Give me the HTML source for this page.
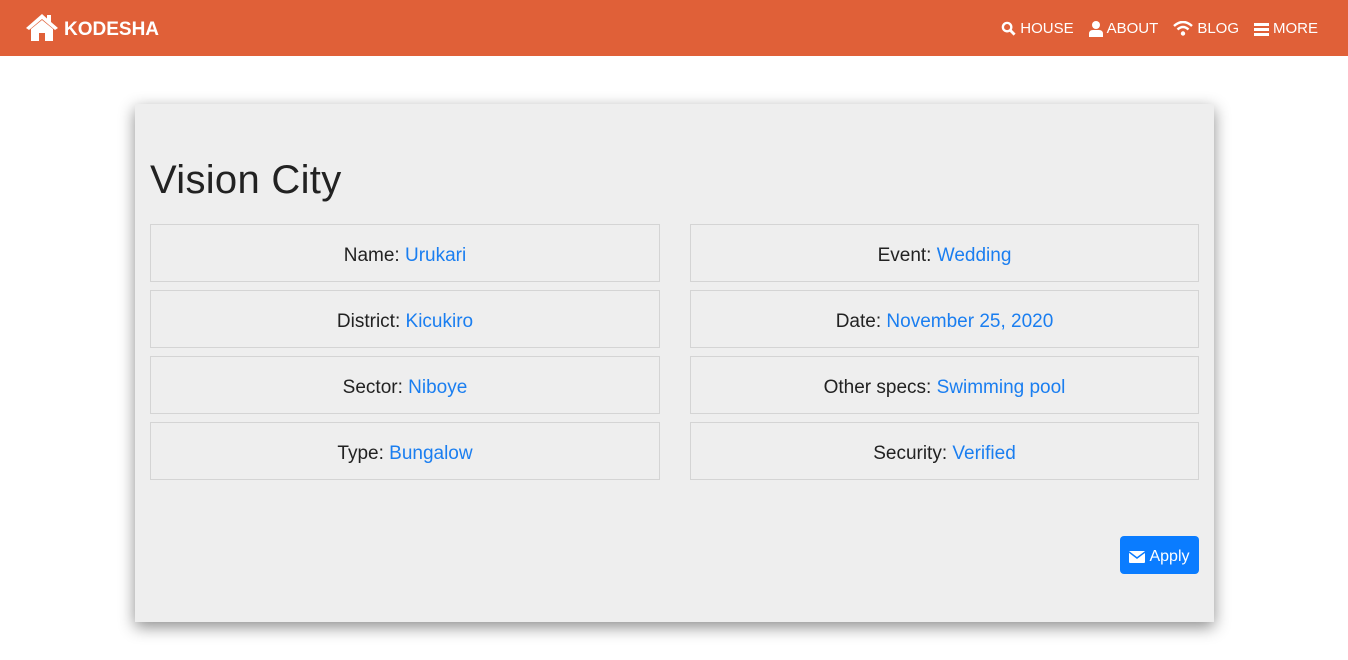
<!DOCTYPE html>
<html><head><style>
*{margin:0;padding:0;box-sizing:border-box}
body{width:1348px;height:660px;background:#fff;font-family:"Liberation Sans",sans-serif;position:relative;overflow:hidden}
.nav{height:56px;background:#e06038;position:relative;color:#fff}
.brand{position:absolute;left:24px;top:12px;display:flex;align-items:center;font-weight:bold;font-size:19px}
.brand span{position:relative;top:3px}
.brand svg{margin-right:4px}
.links{position:absolute;right:30px;top:20px;display:flex;font-size:15px}
.links span{display:flex;align-items:center;margin-left:15px}
.links svg{margin-right:4px}
.card{position:absolute;left:135px;top:104px;width:1079px;height:518px;background:#eee;box-shadow:0 5px 15px rgba(0,0,0,.45)}
h1{position:absolute;left:15px;top:54px;font-size:40px;font-weight:normal;color:#222;letter-spacing:0.3px}
.box{position:absolute;width:510px;height:58px;border:1px solid #d4d4d4;text-align:center;line-height:61px;font-size:19px;color:#222}
.box b{color:#1a7ef0;font-weight:normal}
.btn{position:absolute;left:985px;top:432px;width:79px;height:38px;background:#0a7cff;border-radius:4px;color:#fff;font-size:16px;display:flex;align-items:center;justify-content:center;padding-top:3px}
.btn svg{margin-right:4px}
</style></head><body>
<div class="nav">
<div class="brand"><svg width="36" height="30" viewBox="0 0 36 30"><path d="M18 2 L2 16 L5 18 L18 7 L31 18 L34 16 L27 10 V3 H23 V6.5 Z" fill="#fff"/><path d="M7 17 L18 8 L29 17 V29 H21 V21 H15 V29 H7Z" fill="#fff"/></svg><span>KODESHA</span></div>
<div class="links">
<span><svg width="15" height="15" viewBox="0 0 16 16"><circle cx="6.5" cy="6.5" r="4.5" fill="none" stroke="#fff" stroke-width="2.5"/><path d="M10 10 L14.5 14.5" stroke="#fff" stroke-width="3"/></svg>HOUSE</span>
<span><svg width="14" height="16" viewBox="0 0 14 16"><circle cx="7" cy="4" r="4" fill="#fff"/><path d="M0 16 V13 Q0 9 4 9 H10 Q14 9 14 13 V16Z" fill="#fff"/></svg>ABOUT</span>
<span><svg width="20" height="15" viewBox="0 0 20 15"><path d="M1 5 Q10 -3 19 5" fill="none" stroke="#fff" stroke-width="2.5"/><path d="M4.5 8.5 Q10 3.5 15.5 8.5" fill="none" stroke="#fff" stroke-width="2.5"/><circle cx="10" cy="12.5" r="2.2" fill="#fff"/></svg>BLOG</span>
<span><svg width="15" height="14" viewBox="0 0 15 14"><rect y="1" width="15" height="3" fill="#fff"/><rect y="6" width="15" height="3" fill="#fff"/><rect y="11" width="15" height="3" fill="#fff"/></svg>MORE</span>
</div></div>
<div class="card">
<h1>Vision City</h1>
<div class="box" style="left:15px;top:120px">Name: <b>Urukari</b></div>
<div class="box" style="left:15px;top:186px">District: <b>Kicukiro</b></div>
<div class="box" style="left:15px;top:252px">Sector: <b>Niboye</b></div>
<div class="box" style="left:15px;top:318px">Type: <b>Bungalow</b></div>
<div class="box" style="left:555px;top:120px;width:509px">Event: <b>Wedding</b></div>
<div class="box" style="left:555px;top:186px;width:509px">Date: <b>November 25, 2020</b></div>
<div class="box" style="left:555px;top:252px;width:509px">Other specs: <b>Swimming pool</b></div>
<div class="box" style="left:555px;top:318px;width:509px">Security: <b>Verified</b></div>
<div class="btn"><svg width="16" height="12" viewBox="0 0 16 12"><rect width="16" height="12" rx="1" fill="#fff"/><path d="M0 1 L8 7 L16 1" fill="none" stroke="#0a7cff" stroke-width="1.5"/></svg>Apply</div>
</div>
</body></html>
